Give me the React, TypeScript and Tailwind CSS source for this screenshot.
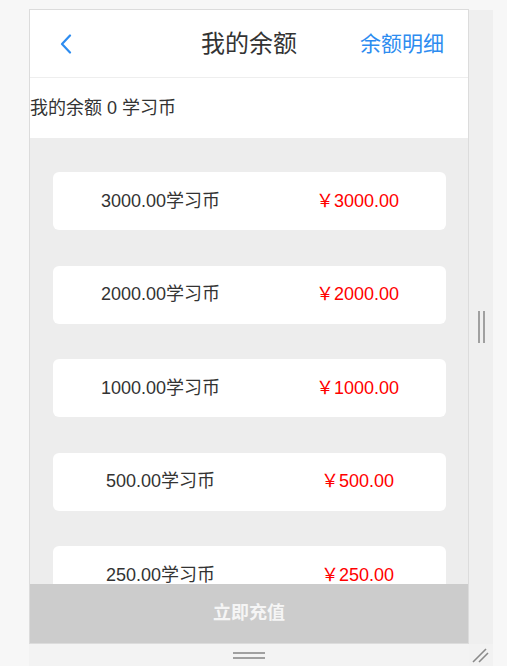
import React from 'react'

const packages = [
  { coins: '3000.00', price: '3000.00' },
  { coins: '2000.00', price: '2000.00' },
  { coins: '1000.00', price: '1000.00' },
  { coins: '500.00', price: '500.00' },
  { coins: '250.00', price: '250.00' },
]

function Header() {
  return (
    <div className="grid h-[68px] shrink-0 grid-cols-[1fr_auto_1fr] items-center border-b border-[#eeeeee]">
      <div className="pl-[30px]">
        <svg width="12" height="20" viewBox="0 0 12 20" fill="none">
          <polyline points="10,1.5 2,10 10,18.5" stroke="#2d8cf0" strokeWidth="2.2" strokeLinecap="round" strokeLinejoin="round" />
        </svg>
      </div>
      <span className="text-[24px] leading-none text-[#333]">我的余额</span>
      <span className="pr-[24px] text-right text-[21px] leading-none text-[#2d8cf0]">余额明细</span>
    </div>
  )
}

function PackageCard({ coins, price }: { coins: string; price: string }) {
  return (
    <div className="flex h-[58px] shrink-0 items-center rounded-[6px] bg-white text-[18px]">
      <span className="w-[216px] text-center text-[#333]">{coins}学习币</span>
      <span className="flex-1 pl-[1px] text-center text-[#ff0000]">￥{price}</span>
    </div>
  )
}

export default function App() {
  return (
    <div className="min-h-[666px] bg-[#f7f7f7] pl-[29px] pt-[9px] font-['Liberation_Sans','Noto_Sans_CJK_SC',sans-serif]">
      <div className="flex">
        {/* Device frame */}
        <div className="flex h-[635px] w-[440px] flex-col border border-[#dcdcdc] bg-white">
          <Header />

          <div className="flex h-[60px] shrink-0 items-center text-[18px] text-[#333]">
            我的余额 0 学习币
          </div>

          {/* Package list */}
          <div className="flex min-h-0 flex-1 flex-col gap-[35.5px] overflow-hidden bg-[#ededed] px-[22.5px] pt-[34px]">
            {packages.map((p) => (
              <PackageCard key={p.coins} coins={p.coins} price={p.price} />
            ))}
          </div>

          <button className="h-[59px] shrink-0 bg-[#cccccc] text-[18px] font-bold text-[#f5f5f5]">
            立即充值
          </button>
        </div>

        {/* Right resizer */}
        <div className="mt-[1px] flex w-[24px] items-center justify-center gap-[3px] bg-[#efefef]">
          <span className="h-[32px] w-[2px] bg-[#a0a0a0]" />
          <span className="h-[32px] w-[2px] bg-[#a0a0a0]" />
        </div>
      </div>

      {/* Bottom resizer */}
      <div className="flex h-[22px] w-[464px]">
        <div className="flex w-[440px] flex-col items-center gap-[3px] bg-[#f3f3f3] pt-[8px]">
          <span className="h-[2px] w-[32px] bg-[#a0a0a0]" />
          <span className="h-[2px] w-[32px] bg-[#a0a0a0]" />
        </div>
        <div className="w-[24px] bg-[#f2f2f2]">
          <svg width="24" height="22" viewBox="0 0 24 22">
            <line x1="4" y1="18" x2="17" y2="5" stroke="#8a8a8a" strokeWidth="1.6" />
            <line x1="10" y1="18" x2="19" y2="9" stroke="#8a8a8a" strokeWidth="1.6" />
          </svg>
        </div>
      </div>
    </div>
  )
}
